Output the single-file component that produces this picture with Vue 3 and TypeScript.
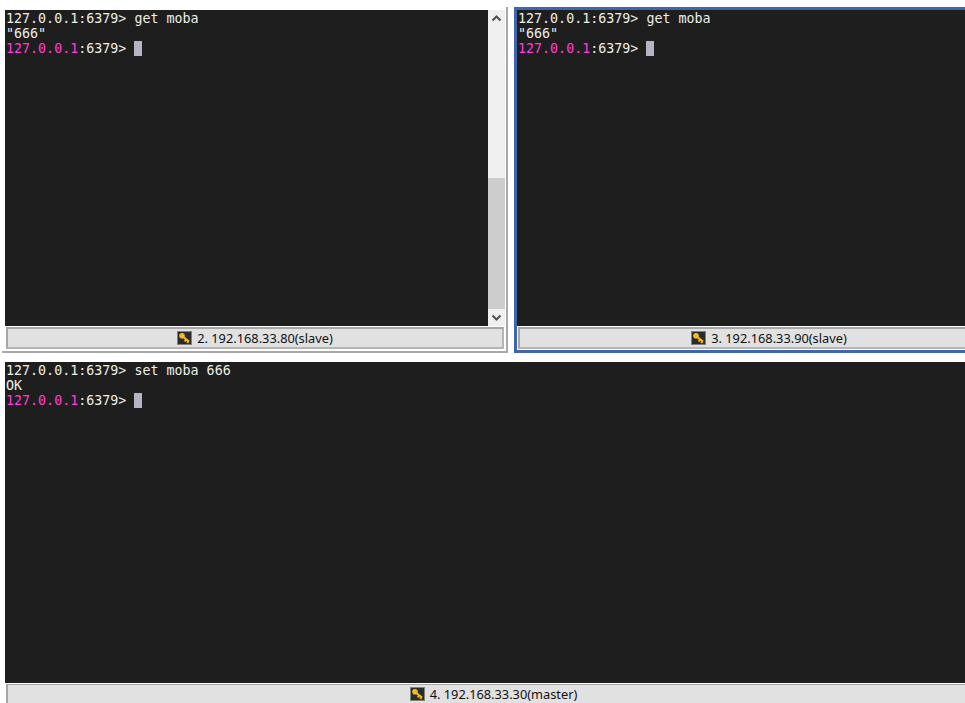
<script setup lang="ts">
interface Line { prompt?: boolean; text: string }
const left: Line[] = [
  { text: '127.0.0.1:6379> get moba' },
  { text: '"666"' },
  { prompt: true, text: ':6379> ' },
]
const bottom: Line[] = [
  { text: '127.0.0.1:6379> set moba 666' },
  { text: 'OK' },
  { prompt: true, text: ':6379> ' },
]
</script>

<template>
  <div class="page">
    <div class="top">
      <section class="pane pane-left">
        <div class="body">
          <div class="term">
            <div v-for="(l, i) in left" :key="i" class="line">
              <span v-if="l.prompt" class="pink">127.0.0.1</span>{{ l.text }}<span v-if="l.prompt" class="cursor"></span>
            </div>
          </div>
          <div class="scrollbar">
            <svg class="chev" width="17" height="17" viewBox="0 0 17 17"><path d="M4.5 10.5 L8.5 6.5 L12.5 10.5" fill="none" stroke="#505050" stroke-width="2" /></svg>
            <div class="track"><div class="thumb"></div></div>
            <svg class="chev" width="17" height="17" viewBox="0 0 17 17"><path d="M4.5 6.5 L8.5 10.5 L12.5 6.5" fill="none" stroke="#505050" stroke-width="2" /></svg>
          </div>
        </div>
        <div class="status status-left">
          <svg class="key" width="15" height="14" viewBox="0 0 15 14"><rect width="15" height="14" fill="#808080" /><rect x="1" y="1" width="13" height="12" fill="#2b2b2b" /><path d="M5 5 L12 10.5 M9 8.5 L7.8 10.5 M11.5 10 L10.3 12" stroke="#f2bd1d" stroke-width="2" fill="none" /><circle cx="5" cy="4.8" r="2.8" fill="#f2bd1d" /></svg>
          <span>2. 192.168.33.80(slave)</span>
        </div>
      </section>
      <section class="pane pane-right">
        <div class="body">
          <div class="term">
            <div v-for="(l, i) in left" :key="i" class="line">
              <span v-if="l.prompt" class="pink">127.0.0.1</span>{{ l.text }}<span v-if="l.prompt" class="cursor"></span>
            </div>
          </div>
        </div>
        <div class="status status-right">
          <svg class="key" width="15" height="14" viewBox="0 0 15 14"><rect width="15" height="14" fill="#808080" /><rect x="1" y="1" width="13" height="12" fill="#2b2b2b" /><path d="M5 5 L12 10.5 M9 8.5 L7.8 10.5 M11.5 10 L10.3 12" stroke="#f2bd1d" stroke-width="2" fill="none" /><circle cx="5" cy="4.8" r="2.8" fill="#f2bd1d" /></svg>
          <span>3. 192.168.33.90(slave)</span>
        </div>
      </section>
    </div>
    <section class="pane-bottom">
      <div class="term term-bottom">
        <div v-for="(l, i) in bottom" :key="i" class="line">
          <span v-if="l.prompt" class="pink">127.0.0.1</span>{{ l.text }}<span v-if="l.prompt" class="cursor"></span>
        </div>
      </div>
      <div class="status status-bottom">
        <svg class="key" width="15" height="14" viewBox="0 0 15 14"><rect width="15" height="14" fill="#808080" /><rect x="1" y="1" width="13" height="12" fill="#2b2b2b" /><path d="M5 5 L12 10.5 M9 8.5 L7.8 10.5 M11.5 10 L10.3 12" stroke="#f2bd1d" stroke-width="2" fill="none" /><circle cx="5" cy="4.8" r="2.8" fill="#f2bd1d" /></svg>
        <span>4. 192.168.33.30(master)</span>
      </div>
    </section>
  </div>
</template>

<style>
html, body { margin: 0; background: #fff; overflow: hidden; }
</style>

<style scoped>
.page {
  width: 965px;
  height: 703px;
  overflow: hidden;
  background: #fff;
  box-sizing: border-box;
  padding-top: 7px;
  display: flex;
  flex-direction: column;
}
.top {
  display: flex;
  height: 346px;
  flex: none;
}
.pane {
  box-sizing: border-box;
  display: flex;
  flex-direction: column;
}
.pane-left {
  width: 506px;
  margin-left: 2px;
  padding: 3px 0 0 3px;
  border-right: 2px solid #a8a8a8;
  border-bottom: 2px solid #a8a8a8;
}
.pane-right {
  width: 451px;
  margin-left: 6px;
  border: 3px solid #3f66ad;
  border-right: 0;
}
.body {
  display: flex;
  height: 316px;
  flex: none;
}
.term {
  flex: 1;
  background: #1e1e1e;
  color: #efefe6;
  font-family: "DejaVu Sans Mono", monospace;
  font-size: 13.33px;
  line-height: 15px;
  padding: 1px 0 0 1px;
  white-space: pre;
}
.term-bottom { height: 320px; flex: none; }
.line { height: 15px; }
.pink { color: #ff3cdc; }
.cursor {
  display: inline-block;
  width: 8px;
  height: 15px;
  background: #b4b4c2;
  vertical-align: top;
}
.scrollbar {
  width: 17px;
  flex: none;
  background: #f0f0f0;
  display: flex;
  flex-direction: column;
  margin-right: 1px;
}
.chev { flex: none; display: block; }
.track {
  flex: 1;
  display: flex;
  flex-direction: column;
  justify-content: flex-end;
}
.thumb { height: 131px; background: #cdcdcd; }
.status {
  box-sizing: border-box;
  height: 22px;
  margin: 1px 1px 0 1px;
  background: #e1e1e1;
  border: 2px solid;
  border-color: #a5a5a5 #b5b5b5 #b5b5b5 #a5a5a5;
  display: flex;
  align-items: center;
  justify-content: center;
  gap: 5px;
  font-family: "Noto Sans", "Open Sans", sans-serif;
  font-size: 12.8px;
  line-height: 16px;
  color: #111;
}
.status-left { margin-right: 2px; }
.status-right { margin: 1px 0 0 1px; width: 502px; flex: none; }
.status-bottom {
  margin: 1px 0 0 1px;
  width: 975px;
  flex: none;
  height: 20px;
  border-bottom: 0;
  border-top-width: 1px;
  padding-bottom: 2px;
}
.key { flex: none; display: block; }
.pane-bottom {
  margin-top: 9px;
  padding-left: 5px;
  flex: 1;
  display: flex;
  flex-direction: column;
}
</style>
